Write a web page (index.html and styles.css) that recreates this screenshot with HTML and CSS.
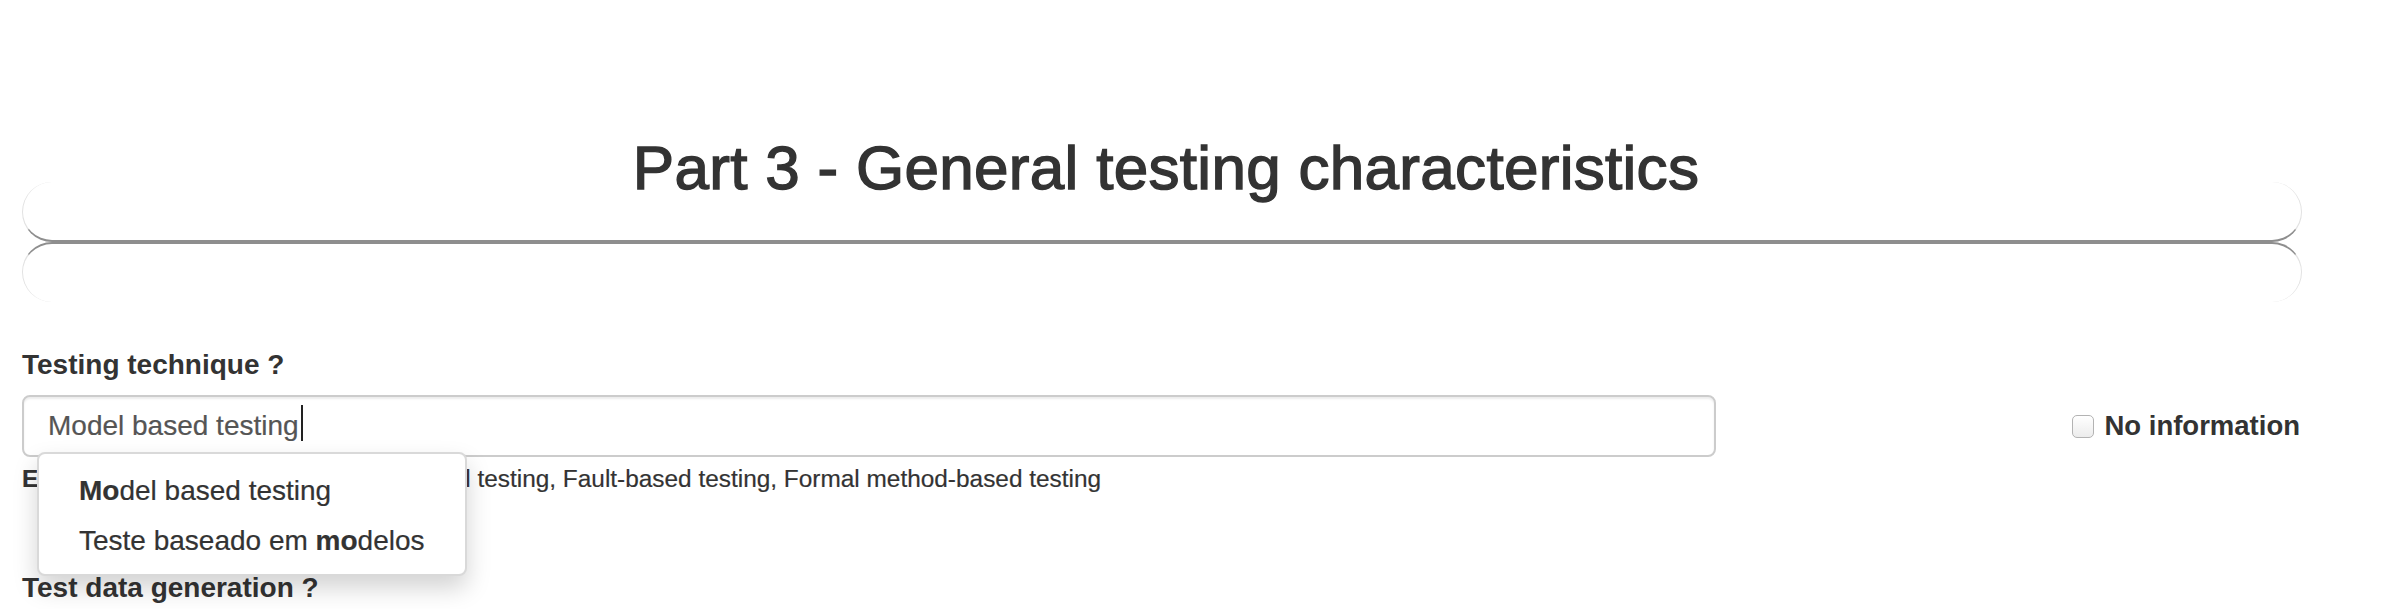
FILE: index.html
```html
<!DOCTYPE html>
<html lang="en">
<head>
<meta charset="utf-8">
<title>Part 3 - General testing characteristics</title>
<link rel="stylesheet" href="styles.css">
</head>
<body>
<div class="page">
  <h1 class="title">Part 3 - General testing characteristics</h1>
  <div class="sep"></div>

  <div class="field">
    <label class="label">Testing technique ?</label>
    <div class="row">
      <div class="input-col">
        <div class="input">Model based testing<span class="caret"></span></div>
        <ul class="dropdown">
          <li><b>Mo</b>del based testing</li>
          <li>Teste baseado em <b>mo</b>delos</li>
        </ul>
      </div>
      <div class="check-col">
        <span class="checkbox"></span>
        <span class="check-label">No information</span>
      </div>
    </div>
    <p class="help"><b class="help-key">Examples :</b> Structural testing, Functional testing, Fault-based testing, Formal method-based testing</p>
  </div>

  <div class="field-2">
    <label class="label">Test data generation ?</label>
  </div>
</div>
</body>
</html>
```
FILE: styles.css
```css
html, body {
  margin: 0;
  padding: 0;
  background: #fff;
}

body {
  font-family: "Liberation Sans", Arial, sans-serif;
  color: #333;
  overflow: hidden;
}

.page {
  padding-left: 22px;
  width: 2280px;
}

.title {
  margin: 134px 0 0;
  padding-left: 8px;
  font-size: 62px;
  font-weight: normal;
  line-height: 68px;
  letter-spacing: 0.3px;
  text-align: center;
  color: #333;
  -webkit-text-stroke: 1.4px #333;
}

.sep {
  margin-top: 40px;
  height: 60px;
  box-sizing: border-box;
  border-style: solid;
  border-color: #8e8e8e #e2e2e2 #e2e2e2;
  border-width: 2px 1px 0;
  border-radius: 30px;
}

.sep::before {
  content: "";
  display: block;
  height: 60px;
  box-sizing: border-box;
  margin: -62px -1px 0;
  border-style: solid;
  border-color: #e2e2e2 #e2e2e2 #8e8e8e;
  border-width: 0 1px 2px;
  border-radius: 30px;
}

.field {
  margin-top: 44px;
}

.field-2 {
  margin-top: 73px;
}

.label {
  display: block;
  font-size: 28px;
  font-weight: bold;
  line-height: 38px;
  margin-bottom: 11px;
}

.row {
  display: flex;
  align-items: center;
}

.input-col {
  position: relative;
  width: 1694px;
}

.input {
  box-sizing: border-box;
  height: 62px;
  border: 2px solid #ccc;
  border-radius: 8px;
  padding: 0 24px;
  font-size: 28px;
  line-height: 58px;
  color: #555;
  white-space: nowrap;
  box-shadow: inset 0 2px 2px rgba(0, 0, 0, 0.075);
  -webkit-text-stroke: 0.2px #555;
}

.caret {
  display: inline-block;
  width: 2px;
  height: 36px;
  background: #222;
  vertical-align: -6px;
  margin-left: 2px;
}

.dropdown {
  position: absolute;
  top: 57px;
  left: 15px;
  z-index: 10;
  margin: 0;
  padding: 12px 0 8px;
  list-style: none;
  background: #fff;
  border: 2px solid rgba(0, 0, 0, 0.15);
  border-radius: 8px;
  box-shadow: 0 12px 24px rgba(0, 0, 0, 0.175);
}

.dropdown li {
  font-size: 28px;
  line-height: 50px;
  padding: 0 40px 0 40px;
  white-space: nowrap;
  color: #333;
  -webkit-text-stroke: 0.2px #333;
}

.check-col {
  flex: 1;
  display: flex;
  justify-content: flex-end;
  align-items: center;
  gap: 10px;
  padding-right: 2px;
}

.checkbox {
  display: block;
  width: 22px;
  height: 23px;
  box-sizing: border-box;
  border: 1.5px solid #b3b3b3;
  border-radius: 5px;
  background: linear-gradient(#fff, #ececec);
}

.check-label {
  font-size: 27.5px;
  font-weight: bold;
  line-height: 38px;
}

.help {
  margin: 5px 0 0;
  font-size: 24.4px;
  line-height: 34px;
  color: #333;
  white-space: nowrap;
  -webkit-text-stroke: 0.2px #333;
}

.help-key {
  margin-right: 4px;
}
```
